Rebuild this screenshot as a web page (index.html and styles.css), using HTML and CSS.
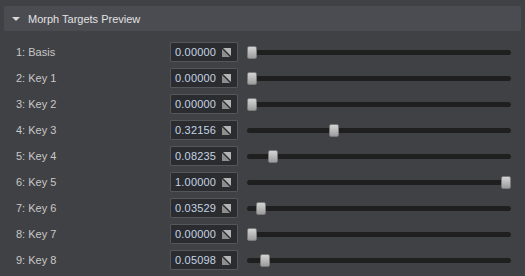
FILE: index.html
```html
<!DOCTYPE html>
<html lang="en">
<head>
<meta charset="UTF-8">
<title>Morph Targets Preview</title>
<link rel="stylesheet" href="styles.css">
</head>
<body>
    <div class="panel">
        <div class="panel-header">
            <span class="caret"></span>
            <span class="panel-title">Morph Targets Preview</span>
        </div>

        <div class="rows">
            <div class="row">
                <span class="label">1: Basis</span>
                <div class="field"><span class="value">0.00000</span><svg class="grip" width="9" height="9" viewBox="0 0 9 9"><polygon points="0,1 0,9 8,9" fill="#8e8e8e"/><polygon points="1,0 9,0 9,8" fill="#b4b4b4"/></svg></div>
                <div class="track"><span class="knob" style="left: calc((100% - 10px) * 0)"></span></div>
            </div>
            <div class="row">
                <span class="label">2: Key 1</span>
                <div class="field"><span class="value">0.00000</span><svg class="grip" width="9" height="9" viewBox="0 0 9 9"><polygon points="0,1 0,9 8,9" fill="#8e8e8e"/><polygon points="1,0 9,0 9,8" fill="#b4b4b4"/></svg></div>
                <div class="track"><span class="knob" style="left: calc((100% - 10px) * 0)"></span></div>
            </div>
            <div class="row">
                <span class="label">3: Key 2</span>
                <div class="field"><span class="value">0.00000</span><svg class="grip" width="9" height="9" viewBox="0 0 9 9"><polygon points="0,1 0,9 8,9" fill="#8e8e8e"/><polygon points="1,0 9,0 9,8" fill="#b4b4b4"/></svg></div>
                <div class="track"><span class="knob" style="left: calc((100% - 10px) * 0)"></span></div>
            </div>
            <div class="row">
                <span class="label">4: Key 3</span>
                <div class="field"><span class="value">0.32156</span><svg class="grip" width="9" height="9" viewBox="0 0 9 9"><polygon points="0,1 0,9 8,9" fill="#8e8e8e"/><polygon points="1,0 9,0 9,8" fill="#b4b4b4"/></svg></div>
                <div class="track"><span class="knob" style="left: calc((100% - 10px) * 0.32156)"></span></div>
            </div>
            <div class="row">
                <span class="label">5: Key 4</span>
                <div class="field"><span class="value">0.08235</span><svg class="grip" width="9" height="9" viewBox="0 0 9 9"><polygon points="0,1 0,9 8,9" fill="#8e8e8e"/><polygon points="1,0 9,0 9,8" fill="#b4b4b4"/></svg></div>
                <div class="track"><span class="knob" style="left: calc((100% - 10px) * 0.08235)"></span></div>
            </div>
            <div class="row">
                <span class="label">6: Key 5</span>
                <div class="field"><span class="value">1.00000</span><svg class="grip" width="9" height="9" viewBox="0 0 9 9"><polygon points="0,1 0,9 8,9" fill="#8e8e8e"/><polygon points="1,0 9,0 9,8" fill="#b4b4b4"/></svg></div>
                <div class="track"><span class="knob" style="left: calc((100% - 10px) * 1)"></span></div>
            </div>
            <div class="row">
                <span class="label">7: Key 6</span>
                <div class="field"><span class="value">0.03529</span><svg class="grip" width="9" height="9" viewBox="0 0 9 9"><polygon points="0,1 0,9 8,9" fill="#8e8e8e"/><polygon points="1,0 9,0 9,8" fill="#b4b4b4"/></svg></div>
                <div class="track"><span class="knob" style="left: calc((100% - 10px) * 0.03529)"></span></div>
            </div>
            <div class="row">
                <span class="label">8: Key 7</span>
                <div class="field"><span class="value">0.00000</span><svg class="grip" width="9" height="9" viewBox="0 0 9 9"><polygon points="0,1 0,9 8,9" fill="#8e8e8e"/><polygon points="1,0 9,0 9,8" fill="#b4b4b4"/></svg></div>
                <div class="track"><span class="knob" style="left: calc((100% - 10px) * 0)"></span></div>
            </div>
            <div class="row">
                <span class="label">9: Key 8</span>
                <div class="field"><span class="value">0.05098</span><svg class="grip" width="9" height="9" viewBox="0 0 9 9"><polygon points="0,1 0,9 8,9" fill="#8e8e8e"/><polygon points="1,0 9,0 9,8" fill="#b4b4b4"/></svg></div>
                <div class="track"><span class="knob" style="left: calc((100% - 10px) * 0.05098)"></span></div>
            </div>
        </div>
    </div>
</body>
</html>
```

FILE: styles.css
```css
body {
    margin: 0;
    padding: 0;
    background-color: #404145;
    font-family: 'Liberation Sans', Arial, sans-serif;
    font-size: 11px;
    color: #c6c6c6;
}

.panel {
    padding: 6px 4px 0 4px;
}

.panel-header {
    display: flex;
    align-items: center;
    height: 25px;
    padding-left: 8px;
    background-color: #4b4c51;
    border-radius: 2px;
}

/* small down arrow */
.caret {
    width: 0;
    height: 0;
    border-left: 4px solid transparent;
    border-right: 4px solid transparent;
    border-top: 4px solid #d8d8d8;
    margin-right: 8px;
}

.panel-title {
    color: #e2e2e2;
}

.rows {
    padding-top: 8px;
}

.row {
    display: flex;
    align-items: center;
    height: 26px;
}

.label {
    width: 154px;
    padding-left: 12px;
    color: #c8c8c8;
}

.field {
    display: flex;
    align-items: center;
    justify-content: space-between;
    box-sizing: border-box;
    width: 68px;
    height: 20px;
    padding: 0 4px 0 4px;
    background-color: #2b2c2f;
    border: 1px solid #55565a;
    border-radius: 1px;
}

.value {
    color: #c4d4e6;
    letter-spacing: 0.2px;
}

.grip {
    display: block;
    margin-right: 2px;
}

.track {
    position: relative;
    width: 264px;
    height: 5px;
    margin-left: 9px;
    background-color: #1f1f20;
    border-radius: 3px;
}

.knob {
    position: absolute;
    top: -4px;
    width: 10px;
    height: 13px;
    box-sizing: border-box;
    border-radius: 2px;
    background: linear-gradient(#d4d4d4, #9c9c9c);
    border: 1px solid #7a7a7a;
}
```
